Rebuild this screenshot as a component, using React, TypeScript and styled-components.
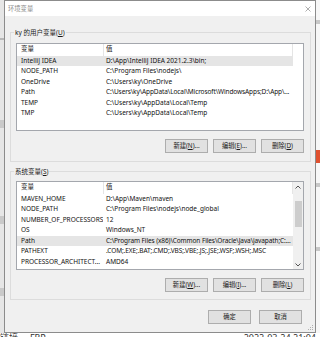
import React from "react";
import styled, { createGlobalStyle } from "styled-components";

const Global = createGlobalStyle`
  html, body { margin: 0; padding: 0; background: #fff; }
  * { box-sizing: border-box; }
`;

const FONT = `"Noto Sans", "Noto Sans CJK SC", sans-serif`;

const Page = styled.div`
  width: 320px;
  height: 337px;
  overflow: hidden;
  display: grid;
  grid-template-columns: 4px 312px 4px;
  grid-template-rows: 333px 4px;
  background: #fff;
  font-family: ${FONT};
`;

const LeftEdge = styled.div`
  background: #e6e6e6;
  display: flex;
  flex-direction: column;
`;

const EdgeMark = styled.div<{ $top: number; $h: number; $c: string }>`
  margin-top: ${(p) => p.$top}px;
  height: ${(p) => p.$h}px;
  background: ${(p) => p.$c};
  flex: none;
`;

const RightEdge = styled.div`
  background: #f7f7f7;
  display: flex;
  flex-direction: column;
`;

const BottomStrip = styled.div`
  grid-column: 1 / 4;
  display: flex;
  justify-content: space-between;
  overflow: hidden;
  font-size: 9px;
  line-height: 9px;
  color: #333;
  padding: 0 4px 0 0;
  background: #fff;
`;

const Dialog = styled.div`
  position: relative;
  border: 1px solid #8c8c8c;
  background: #f0f0f0;
  display: flex;
  flex-direction: column;
  height: 333px;
`;

const TitleBar = styled.div`
  height: 15px;
  flex: none;
  background: #fff;
  display: flex;
  align-items: center;
  justify-content: space-between;
  padding: 0 4px 0 3px;
  font-size: 6.3px;
  line-height: 8px;
  color: #8a8a8a;
`;

const Body = styled.div`
  display: flex;
  flex-direction: column;
  padding-top: 11px;
`;

const Group = styled.fieldset<{ $top: number; $pt: number; $pb: number }>`
  margin: ${(p) => p.$top}px 4px 0 5px;
  padding: ${(p) => p.$pt}px 6px ${(p) => p.$pb}px 5px;
  border: 1px solid #dcdcdc;
  min-width: 0;
`;

const Legend = styled.legend`
  padding: 0 1px;
  margin-left: -2px;
  font-size: 6.5px;
  line-height: 11px;
  color: #1a1a1a;
`;

const List = styled.div<{ $h: number }>`
  height: ${(p) => p.$h}px;
  background: #fff;
  border: 1px solid #a4a7ad;
  display: flex;
  overflow: hidden;
`;

const Table = styled.div`
  width: 276px;
  flex: none;
  display: flex;
  flex-direction: column;
`;

const HeaderRow = styled.div`
  height: 11.5px;
  flex: none;
  display: grid;
  grid-template-columns: 87px 189px;
  font-size: 6.5px;
  line-height: 10px;
  color: #1a1a1a;
`;

const HeaderCell = styled.div<{ $pl: number }>`
  padding-left: ${(p) => p.$pl}px;
  border-right: 1px solid #e5e5e5;
`;

const Row = styled.div<{ $sel?: boolean }>`
  height: 10.55px;
  flex: none;
  display: grid;
  grid-template-columns: 86px 190px;
  align-items: center;
  background: ${(p) => (p.$sel ? "#e5e5e5" : "transparent")};
  font-size: 6.5px;
  line-height: 10.5px;
  color: #111;
  white-space: nowrap;
`;

const Cell = styled.div<{ $pl: number; $tight?: boolean }>`
  padding-left: ${(p) => p.$pl}px;
  overflow: hidden;
  letter-spacing: ${(p) => (p.$tight ? "-0.1px" : "0")};
`;

const ScrollBar = styled.div`
  flex: 1;
  background: #f0f0f0;
  display: flex;
  flex-direction: column;
  align-items: center;
`;

const Arrow = styled.div`
  height: 9px;
  width: 100%;
  display: flex;
  align-items: center;
  justify-content: center;
  flex: none;
`;

const Thumb = styled.div`
  margin-top: 10px;
  width: 7px;
  height: 26px;
  background: #cdcdcd;
  flex: none;
`;

const Spacer = styled.div`
  flex: 1;
`;

const ButtonRow = styled.div<{ $mt: number; $gap: number; $pr?: number }>`
  margin-top: ${(p) => p.$mt}px;
  display: flex;
  justify-content: flex-end;
  gap: ${(p) => p.$gap}px;
  padding-right: ${(p) => p.$pr ?? 0}px;
`;

const Button = styled.div`
  width: 43px;
  height: 14px;
  background: #e1e1e1;
  border: 1px solid #adadad;
  display: flex;
  align-items: center;
  justify-content: center;
  font-size: 6.3px;
  line-height: 8px;
  color: #1a1a1a;
  white-space: nowrap;
`;

const Grip = styled.svg`
  position: absolute;
  right: 1px;
  bottom: 1px;
`;

const userVars: [string, string][] = [
  ["IntelliJ IDEA", "D:\\App\\IntelliJ IDEA 2021.2.3\\bin;"],
  ["NODE_PATH", "C:\\Program Files\\nodejs\\"],
  ["OneDrive", "C:\\Users\\ky\\OneDrive"],
  ["Path", "C:\\Users\\ky\\AppData\\Local\\Microsoft\\WindowsApps;D:\\App\\..."],
  ["TEMP", "C:\\Users\\ky\\AppData\\Local\\Temp"],
  ["TMP", "C:\\Users\\ky\\AppData\\Local\\Temp"],
];

const sysVars: [string, string][] = [
  ["MAVEN_HOME", "D:\\App\\Maven\\maven"],
  ["NODE_PATH", "C:\\Program Files\\nodejs\\node_global"],
  ["NUMBER_OF_PROCESSORS", "12"],
  ["OS", "Windows_NT"],
  ["Path", "C:\\Program Files (x86)\\Common Files\\Oracle\\Java\\javapath;C:..."],
  ["PATHEXT", ".COM;.EXE;.BAT;.CMD;.VBS;.VBE;.JS;.JSE;.WSF;.WSH;.MSC"],
  ["PROCESSOR_ARCHITECT...", "AMD64"],
];

function VarTable({ rows, sel }: { rows: [string, string][]; sel: number }) {
  return (
    <Table>
      <HeaderRow>
        <HeaderCell $pl={4}>变量</HeaderCell>
        <HeaderCell $pl={2}>值</HeaderCell>
      </HeaderRow>
      {rows.map(([k, v], i) => (
        <Row key={k + i} $sel={i === sel}>
          <Cell $pl={4}>{k}</Cell>
          <Cell $pl={3} $tight={v.length > 45}>
            {v}
          </Cell>
        </Row>
      ))}
    </Table>
  );
}

const Chevron = ({ up }: { up: boolean }) => (
  <svg width="6" height="4" viewBox="0 0 6 4">
    <path
      d={up ? "M0.5 3.5 L3 1 L5.5 3.5" : "M0.5 0.5 L3 3 L5.5 0.5"}
      fill="none"
      stroke="#555"
      strokeWidth="1"
    />
  </svg>
);

export default function App() {
  return (
    <>
      <Global />
      <Page>
        <LeftEdge>
          <EdgeMark $top={38} $h={2} $c="#b8b8b8" />
          <EdgeMark $top={80} $h={8} $c="#c9c9c9" />
          <EdgeMark $top={88} $h={8} $c="#c9c9c9" />
          <EdgeMark $top={64} $h={8} $c="#c9c9c9" />
          <EdgeMark $top={64} $h={2} $c="#b8b8b8" />
        </LeftEdge>
        <Dialog>
          <TitleBar>
            <span>环境变量</span>
            <svg width="6" height="6" viewBox="0 0 6 6">
              <path d="M0.5 0.5 L5.5 5.5 M5.5 0.5 L0.5 5.5" stroke="#999" strokeWidth="0.8" />
            </svg>
          </TitleBar>
          <Body>
            <Group $top={0} $pt={5} $pb={8}>
              <Legend>
                ky 的用户变量(<u>U</u>)
              </Legend>
              <List $h={88}>
                <VarTable rows={userVars} sel={0} />
              </List>
              <ButtonRow $mt={8} $gap={5}>
                <Button>
                  新建(<u>N</u>)...
                </Button>
                <Button>
                  编辑(<u>E</u>)...
                </Button>
                <Button>
                  删除(<u>D</u>)
                </Button>
              </ButtonRow>
            </Group>
            <Group $top={4} $pt={4} $pb={7}>
              <Legend>
                系统变量(<u>S</u>)
              </Legend>
              <List $h={89}>
                <VarTable rows={sysVars} sel={4} />
                <ScrollBar>
                  <Arrow>
                    <Chevron up />
                  </Arrow>
                  <Thumb />
                  <Spacer />
                  <Arrow>
                    <Chevron up={false} />
                  </Arrow>
                </ScrollBar>
              </List>
              <ButtonRow $mt={8} $gap={5}>
                <Button>
                  新建(<u>W</u>)...
                </Button>
                <Button>
                  编辑(<u>I</u>)...
                </Button>
                <Button>
                  删除(<u>L</u>)
                </Button>
              </ButtonRow>
            </Group>
            <ButtonRow $mt={10} $gap={8} $pr={13}>
              <Button>确定</Button>
              <Button>取消</Button>
            </ButtonRow>
          </Body>
          <Grip width="6" height="6" viewBox="0 0 6 6">
            <rect x="4" y="0" width="1" height="1" fill="#b0b0b0" />
            <rect x="2" y="2" width="1" height="1" fill="#b0b0b0" />
            <rect x="4" y="2" width="1" height="1" fill="#b0b0b0" />
            <rect x="0" y="4" width="1" height="1" fill="#b0b0b0" />
            <rect x="2" y="4" width="1" height="1" fill="#b0b0b0" />
            <rect x="4" y="4" width="1" height="1" fill="#b0b0b0" />
          </Grip>
        </Dialog>
        <RightEdge>
          <EdgeMark $top={20} $h={4} $c="#c8c8c8" />
          <EdgeMark $top={126} $h={13} $c="#e0512f" />
          <EdgeMark $top={20} $h={4} $c="#c8c8c8" />
          <EdgeMark $top={60} $h={4} $c="#c8c8c8" />
        </RightEdge>
        <BottomStrip>
          <span>链接 ... FRP</span>
          <span>2022-03-24 21:04</span>
        </BottomStrip>
      </Page>
    </>
  );
}
